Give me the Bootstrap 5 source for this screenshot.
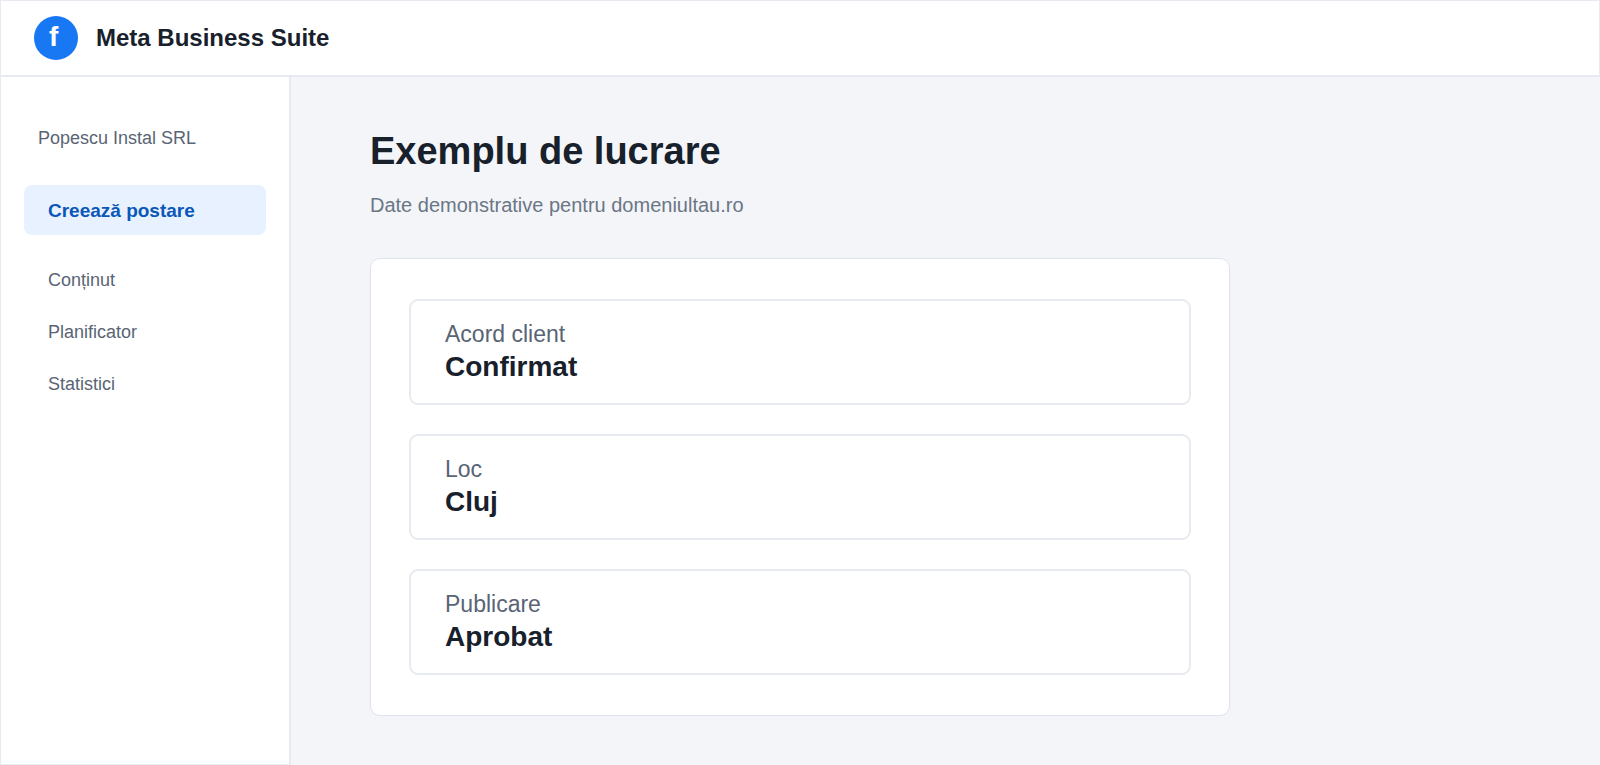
<!DOCTYPE html>
<html lang="ro">
<head>
<meta charset="utf-8">
<meta name="viewport" content="width=device-width, initial-scale=1">
<title>Meta Business Suite</title>
<link href="https://cdn.jsdelivr.net/npm/bootstrap@5.3.0/dist/css/bootstrap.min.css" rel="stylesheet">
<style>
  :root { --ink: #17202b; --slate: #596474; --line: #e7eaf0; --edge: #dfe3eb; }
  body { font-family: "Liberation Sans", Arial, sans-serif; color: var(--ink); background: #f3f5f9; }
  .topbar { border: 1px solid var(--line); border-bottom-width: 2px; padding: 15px 33px; gap: 18px; }
  .brand-logo { width: 44px; height: 44px; padding-left: 15px; background: #1877f2; font-size: 28px; line-height: 42px; }
  .brand-name { font-size: 24px; line-height: 28px; color: var(--ink); }
  .side { width: 291px; border: 1px solid var(--line); border-top: 0; border-right-width: 2px; padding: 48px 23px; }
  .account { font-size: 18px; line-height: 26px; color: var(--slate); padding-left: 14px; margin-bottom: 34px; }
  .side .nav-link { font-size: 18px; line-height: 28px; padding: 12px 24px; color: var(--slate); }
  .side .nav-link.active { font-size: 19px; line-height: 28px; padding-bottom: 10px; margin-bottom: 19px; border-radius: 8px; color: #0b57b7; background: #e7f1ff; }
  .content { padding: 52px 79px 48px; }
  .content h1 { font-size: 38px; line-height: 44px; margin-bottom: 18px; }
  .intro { font-size: 20px; line-height: 28px; color: #6b7685; margin-bottom: 39px; }
  .details { max-width: 860px; border: 1px solid var(--edge); border-radius: 10px; padding: 40px 38px; gap: 29px; }
  .detail { border: 2px solid var(--line); border-radius: 9px; padding: 17px 34px 19px; }
  .detail dt { font-size: 23px; line-height: 32px; color: var(--slate); }
  .detail dd { font-size: 28px; line-height: 34px; }
</style>
</head>
<body class="d-flex flex-column min-vh-100">
<header class="topbar bg-white d-flex align-items-center">
  <span class="brand-logo rounded-circle text-white fw-bold" aria-hidden="true">f</span>
  <a href="#" class="brand-name fw-bold text-decoration-none">Meta Business Suite</a>
</header>
<div class="d-flex flex-grow-1">
  <aside class="side bg-white flex-shrink-0">
    <p class="account">Popescu Instal SRL</p>
    <nav class="nav flex-column">
      <a class="nav-link active fw-bold" aria-current="page" href="#">Creează postare</a>
      <a class="nav-link" href="#">Conținut</a>
      <a class="nav-link" href="#">Planificator</a>
      <a class="nav-link" href="#">Statistici</a>
    </nav>
  </aside>
  <main class="content flex-grow-1">
    <h1 class="fw-bold">Exemplu de lucrare</h1>
    <p class="intro">Date demonstrative pentru domeniultau.ro</p>
    <dl class="details bg-white d-flex flex-column mb-0">
      <div class="detail"><dt class="fw-normal">Acord client</dt><dd class="fw-bold mb-0">Confirmat</dd></div>
      <div class="detail"><dt class="fw-normal">Loc</dt><dd class="fw-bold mb-0">Cluj</dd></div>
      <div class="detail"><dt class="fw-normal">Publicare</dt><dd class="fw-bold mb-0">Aprobat</dd></div>
    </dl>
  </main>
</div>
<script src="https://cdn.jsdelivr.net/npm/bootstrap@5.3.0/dist/js/bootstrap.bundle.min.js"></script>
</body>
</html>
